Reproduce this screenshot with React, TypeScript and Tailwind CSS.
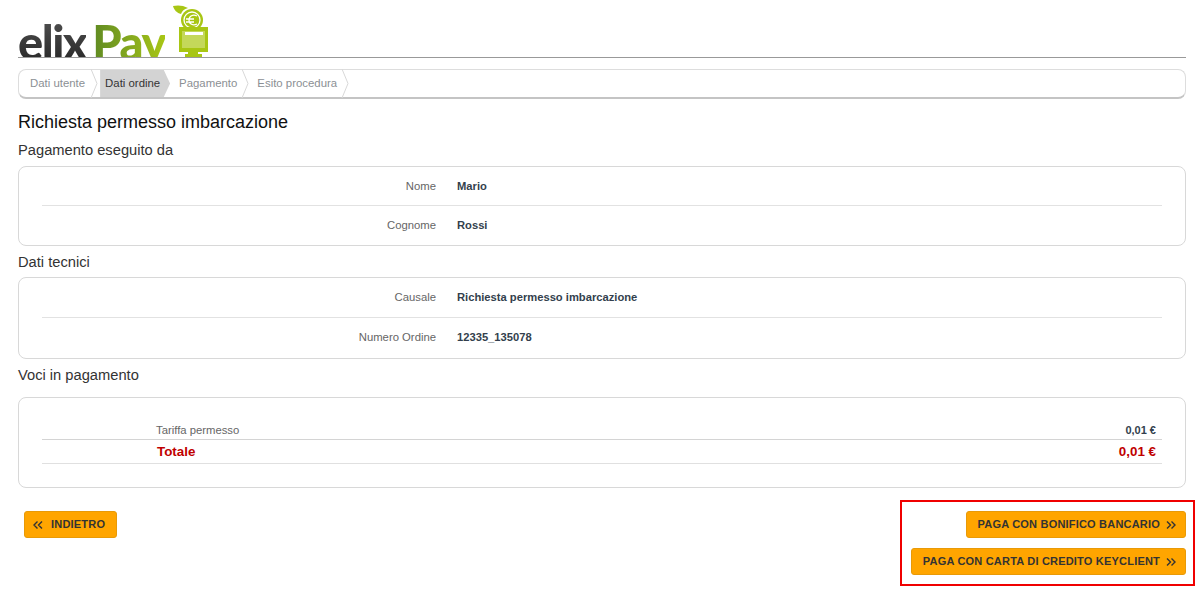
import type { ReactNode } from 'react'

const sans = "font-['Liberation_Sans',Arial,sans-serif]"

function Chevron() {
  return (
    <svg width="8" height="29" viewBox="0 0 8 29" className="shrink-0" fill="none">
      <path d="M1 0 L7 14.5 L1 29" stroke="#d8d8d8" strokeWidth="1" />
    </svg>
  )
}

function Logo() {
  return (
    <div className="relative h-[57px] overflow-hidden">
      <div className="absolute left-0 top-[14px] flex whitespace-nowrap font-['Lato',sans-serif] text-[47px] leading-[56px] font-black tracking-[-1.5px]">
        <span className="bg-gradient-to-b from-[#555] to-[#222] bg-clip-text text-transparent">elix</span>
        <span className="ml-[6px] bg-gradient-to-r from-[#5f8a22] to-[#a8c614] bg-clip-text text-transparent">Pay</span>
      </div>
      <svg className="absolute left-[155px] top-0" width="38" height="57" viewBox="0 0 38 57">
        <path d="M0 6 C4 5 10 5 15 8 C11 9 9 11 8 14 C4 13 1 10 0 6 Z" fill="#a8c614" />
        <circle cx="19" cy="20" r="11" fill="#a8c614" />
        <circle cx="19" cy="20" r="8" fill="none" stroke="#fff" strokeWidth="1.3" />
        <path d="M24 16 C20 14 16 16 16 20 C16 24 20 26 24 24 M13 19 H21 M13 22 H21" fill="none" stroke="#fff" strokeWidth="1.3" />
        <rect x="6" y="27" width="29" height="25" fill="#a8c614" />
        <rect x="9" y="31" width="23" height="17" fill="#c4d85a" />
        <rect x="12" y="32" width="18" height="3" fill="#fff" />
        <rect x="15" y="52" width="10" height="2" fill="#a8c614" />
        <rect x="12" y="54" width="17" height="3" fill="#a8c614" />
      </svg>
    </div>
  )
}

function Breadcrumb() {
  return (
    <div className="mt-[11px] flex h-[30px] items-center rounded-[8px] border border-[#ddd] border-b-2 border-b-[#c4c4c4] pl-[11px] text-[11.4px] text-[#8b8f94]">
      <span>Dati utente</span>
      <span className="ml-[5px]"><Chevron /></span>
      <span className="ml-[2px] flex h-full w-[70px] items-center bg-[#d3d3d3] pl-[5px] text-[#333] [clip-path:polygon(0_0,91%_0,100%_50%,91%_100%,0_100%)]">
        Dati ordine
      </span>
      <span className="ml-[9px]">Pagamento</span>
      <span className="ml-[4px]"><Chevron /></span>
      <span className="ml-[8px]">Esito procedura</span>
      <span className="ml-[4px]"><Chevron /></span>
    </div>
  )
}

function SectionTitle({ children, className }: { children: ReactNode; className: string }) {
  return <h2 className={`text-[14.7px] leading-[17px] text-[#333] ${className}`}>{children}</h2>
}

function InfoRow({ label, value, rowClass }: { label: string; value: string; rowClass: string }) {
  return (
    <div className={`flex items-center gap-[21px] ${rowClass}`}>
      <span className="w-[394px] text-right text-[11.3px] text-[#666]">{label}</span>
      <span className="text-[11.2px] font-bold text-[#333f4d]">{value}</span>
    </div>
  )
}

function InfoCard({ rows, tall }: { rows: [string, string][]; tall?: boolean }) {
  return (
    <div className="rounded-[8px] border border-[#d8d8d8] px-[23px]">
      {rows.map(([label, value], i) => {
        const last = i === rows.length - 1
        const height = tall ? 'h-[40px]' : 'h-[39px]'
        const edge = last ? (tall ? 'pb-[2px]' : '') : 'border-b border-[#e2e2e2]'
        return <InfoRow key={label} label={label} value={value} rowClass={`${height} ${edge}`} />
      })}
    </div>
  )
}

function ArrowIcon({ back }: { back?: boolean }) {
  return (
    <svg width="10" height="8" viewBox="0 0 10 8" fill="none" stroke="#333" strokeWidth="1.4" className={back ? 'rotate-180' : ''}>
      <path d="M1 0.5 L4.5 4 L1 7.5 M5.5 0.5 L9 4 L5.5 7.5" />
    </svg>
  )
}

function PayButton({ label, back }: { label: string; back?: boolean }) {
  return (
    <button
      className={`flex h-[27px] items-center whitespace-nowrap rounded-[3px] border border-[#e89a08] bg-[#ffa500] text-[11px] font-bold tracking-[0.2px] text-[#333] ${
        back ? 'gap-[8px] pl-[8px] pr-[11px]' : 'gap-[6px] pl-[11px] pr-[9px]'
      }`}
    >
      {back && <ArrowIcon back />}
      <span>{label}</span>
      {!back && <ArrowIcon />}
    </button>
  )
}

export default function App() {
  return (
    <div className={`h-[603px] overflow-hidden bg-white pl-[18px] pr-[14px] ${sans}`}>
      <div className="border-b border-[#999]">
        <Logo />
      </div>
      <Breadcrumb />

      <h1 className="mt-[13px] text-[18px] leading-[20px] text-[#111]">Richiesta permesso imbarcazione</h1>

      <SectionTitle className="mt-[10px]">Pagamento eseguito da</SectionTitle>
      <div className="mt-[7px]">
        <InfoCard rows={[['Nome', 'Mario'], ['Cognome', 'Rossi']]} />
      </div>

      <SectionTitle className="mt-[8px]">Dati tecnici</SectionTitle>
      <div className="mt-[6px]">
        <InfoCard tall rows={[['Causale', 'Richiesta permesso imbarcazione'], ['Numero Ordine', '12335_135078']]} />
      </div>

      <SectionTitle className="mt-[8px]">Voci in pagamento</SectionTitle>
      <div className="mt-[13px] h-[91px] rounded-[8px] border border-[#d8d8d8] px-[23px] pt-[20px]">
        <div className="flex h-[22px] items-center justify-between border-b border-[#d4d4d4] pl-[114px] pr-[6px] pt-[3px]">
          <span className="text-[11.3px] text-[#666]">Tariffa permesso</span>
          <span className="text-[11px] font-bold text-[#333f4d]">0,01 €</span>
        </div>
        <div className="flex h-[24px] items-center justify-between border-b border-[#e0e0e0] pl-[115px] pr-[6px] pt-px text-[13.4px] font-bold text-[#c00000]">
          <span>Totale</span>
          <span>0,01 €</span>
        </div>
      </div>

      <div className="mt-[12px] flex items-start justify-between pl-[6px]">
        <div className="mt-[11px]">
          <PayButton label="INDIETRO" back />
        </div>
        <div className="-mr-[9px] flex h-[86px] w-[295px] flex-col items-end gap-[10px] border-2 border-[#f00000] pr-[7px] pt-[9px]">
          <PayButton label="PAGA CON BONIFICO BANCARIO" />
          <PayButton label="PAGA CON CARTA DI CREDITO KEYCLIENT" />
        </div>
      </div>
    </div>
  )
}
